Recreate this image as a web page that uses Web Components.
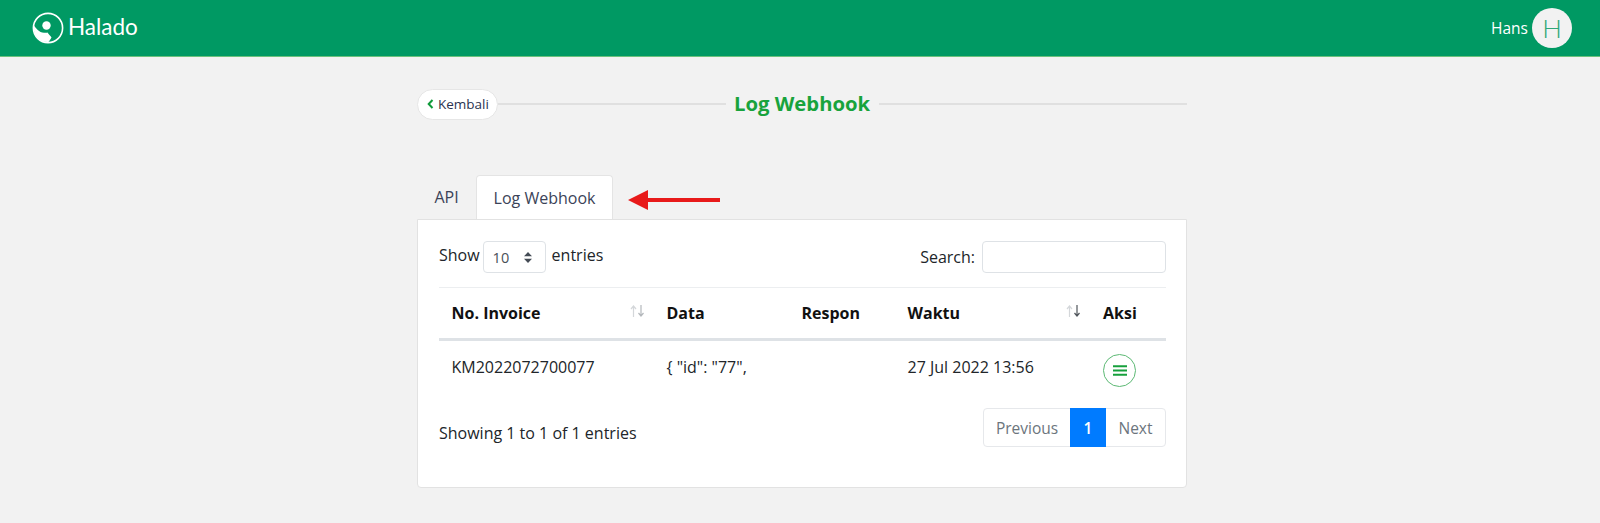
<!DOCTYPE html>
<html lang="id">
<head>
<meta charset="utf-8">
<title>Log Webhook</title>
<style>
  html, body { margin: 0; height: 100%; }
  body { background: #f2f2f2; color: #212529; font-family: "Open Sans", "Noto Sans", sans-serif; font-size: 16px; overflow: hidden; }
</style>
</head>
<body>
<app-header user="Hans"></app-header>
<main-page>
  <page-title back="Kembali">Log Webhook</page-title>
  <tab-bar></tab-bar>
  <log-card></log-card>
</main-page>

<script>
class AppHeader extends HTMLElement {
  connectedCallback() {
    const user = this.getAttribute("user");
    this.attachShadow({ mode: "open" });
    this.shadowRoot.innerHTML = `
      <style>
        :host { display: flex; align-items: center; justify-content: space-between; box-sizing: border-box; height: 57px; padding: 0 28px 1px 32px; background: #009963; border-bottom: 1px solid #6cc27c; color: #fff; }
        .brand { display: flex; align-items: center; gap: 4px; }
        .brand span { font-family: Lato, sans-serif; font-weight: 400; font-size: 22.500px; line-height: 1; }
        .user { display: flex; align-items: center; gap: 4px; font-size: 15.500px; }
        .avatar { width: 40px; height: 40px; border-radius: 50%; background: #f2f2f2; color: #2fa878; display: flex; align-items: center; justify-content: center; font-size: 26px; font-weight: 300; font-family: Lato, sans-serif; }
      </style>
      <div class="brand">
        <svg width="32" height="32" viewBox="0 0 32 32">
          <circle cx="16" cy="16" r="14.600" fill="none" stroke="#fff" stroke-width="1.600"/>
          <path d="M1.500 13C4 16 7 20.500 12 20.800c1.500 0 2.500 0 3.500-.3 1.500 2 3 3.500 4 5-1 1.800-2 3.300-3 4.500C7 30.500 1 23 1.500 13Z" fill="#fff"/>
          <circle cx="14.500" cy="13.500" r="4.200" fill="#fff"/>
        </svg>
        <span>Halado</span>
      </div>
      <div class="user">${user}<div class="avatar">H</div></div>`;
  }
}

class MainPage extends HTMLElement {
  constructor() {
    super();
    this.attachShadow({ mode: "open" });
    this.shadowRoot.innerHTML = `
      <style>
        :host { display: block; box-sizing: border-box; width: 770px; margin: 0 0 0 417px; padding-top: 31px; position: relative; }
      </style>
      <slot></slot>`;
  }
}

class PageTitle extends HTMLElement {
  connectedCallback() {
    const back = this.getAttribute("back");
    this.attachShadow({ mode: "open" });
    this.shadowRoot.innerHTML = `
      <style>
        :host { display: flex; align-items: center; height: 31px; }
        .back { display: flex; align-items: center; gap: 4px; box-sizing: border-box; width: 81px; height: 31px; margin-top: 1px; padding-left: 9px; border: 1px solid #e6e6e6; border-radius: 16px; background: #fff; font-size: 13.500px; color: #2b3350; }
        .line { flex: 1; height: 2px; background: #e0e0e0; }
        .line.left { flex: none; width: 228px; }
        h1 { margin: 0 9px 0 8px; font-size: 20.300px; font-weight: 700; color: #18a33c; line-height: 31px; }
      </style>
      <div class="back">
        <svg width="7" height="10" viewBox="0 0 7 10"><path d="M5.500 1 1.700 5l3.800 4" fill="none" stroke="#109a3a" stroke-width="2"/></svg>
        ${back}
      </div>
      <div class="line left"></div>
      <h1><slot></slot></h1>
      <div class="line"></div>`;
  }
}

class TabBar extends HTMLElement {
  constructor() {
    super();
    this.attachShadow({ mode: "open" });
    this.shadowRoot.innerHTML = `
      <style>
        :host { display: flex; align-items: stretch; height: 44px; margin-top: 56px; position: relative; color: #3b4358; font-size: 16px; }
        .tab { display: flex; align-items: center; justify-content: center; box-sizing: border-box; }
        .plain { width: 59px; }
        .active { width: 137px; background: #fff; border: 1px solid #e4e4e4; border-bottom: 0; border-radius: 4px 4px 0 0; }
        svg { position: absolute; left: 211px; top: 15px; }
      </style>
      <div class="tab plain">API</div>
      <div class="tab active">Log Webhook</div>
      <svg width="92" height="20" viewBox="0 0 92 20"><path d="M0 10 20 0v8h72v4H20v8Z" fill="#e81a1a"/></svg>`;
  }
}

class LogCard extends HTMLElement {
  constructor() {
    super();
    this.attachShadow({ mode: "open" });
    const sort = (left, right) => `<svg class="sort" width="15" height="12" viewBox="0 0 15 12">
      <path d="M3.500 12V1.500M1 4l2.500-3L6 4" fill="none" stroke="${left}" stroke-width="1.200"/>
      <path d="M11 0v10.500M8.500 8l2.500 3 2.500-3" fill="none" stroke="${right}" stroke-width="1.200"/></svg>`;
    this.shadowRoot.innerHTML = `
      <style>
        :host { display: block; box-sizing: border-box; height: 269px; padding: 21px 20px 0 21px; background: #fff; border: 1px solid #e2e2e2; border-radius: 0 0 4px 4px; color: #212529; }
        .toolbar { display: flex; justify-content: space-between; height: 46px; }
        .length { display: flex; align-items: flex-start; line-height: 28px; gap: 5px; }
        .search { display: flex; gap: 7px; line-height: 32px; }
        .picker { position: relative; margin: 0 1px 0 -2px; }
        select { appearance: none; box-sizing: border-box; display: block; width: 63px; height: 32px; padding: 0 0 0 9px; border: 1px solid #dee2e6; border-radius: 4px; background: #fff; font: 14.500px "Open Sans", sans-serif; color: #495057; }
        .picker svg { position: absolute; right: 13px; top: 11px; }
        input { box-sizing: border-box; width: 184px; height: 32px; border: 1px solid #dee2e6; border-radius: 4px; background: #fff; }
        table { width: 727px; border-collapse: collapse; table-layout: fixed; border-top: 1px solid #eceef0; }
        th { height: 52px; padding: 0 13px 0 12.500px; text-align: left; font-weight: 700; color: #111; border-bottom: 3px solid #dee2e6; box-sizing: border-box; }
        td { height: 52px; padding: 0 13px 0 12.500px; }
        th:last-child, td:last-child { padding-left: 13px; }
        .th-in { display: flex; justify-content: space-between; align-items: center; }
        .sort { margin: -4px -4px 0 0; flex: none; }
        .action { display: flex; align-items: center; justify-content: center; width: 33px; height: 33px; box-sizing: border-box; border: 1px solid #5cb974; border-radius: 50%; background: #fff; margin-top: 6px; }
        .footer { display: flex; justify-content: space-between; align-items: center; margin-top: 15px; }
        .info { padding-top: 11px; }
        .pager { display: flex; height: 39px; box-sizing: border-box; border: 1px solid #e6e8eb; border-radius: 4px; color: #6c757d; font-size: 15.500px; }
        .pager div { display: flex; align-items: center; justify-content: center; }
        .prev { width: 86px; }
        .current { width: 36px; background: #007bff; color: #fff; margin: -1px 0; font-weight: 600; }
        .next { width: 59px; }
      </style>
      <div class="toolbar">
        <div class="length">Show
          <div class="picker">
            <select><option>10</option></select>
            <svg width="10" height="11" viewBox="0 0 10 11"><path d="M5 0 9 4.300H1ZM5 11 1 6.700h8Z" fill="#444b55"/></svg>
          </div>
          entries
        </div>
        <div class="search">Search: <input type="search"></div>
      </div>
      <table>
        <colgroup><col style="width:215px"><col style="width:135px"><col style="width:106px"><col style="width:195px"><col style="width:76px"></colgroup>
        <thead>
          <tr>
            <th><div class="th-in">No. Invoice ${sort("#d4d7da", "#b4b8bc")}</div></th>
            <th>Data</th>
            <th>Respon</th>
            <th><div class="th-in">Waktu ${sort("#d4d7da", "#50565c")}</div></th>
            <th>Aksi</th>
          </tr>
        </thead>
        <tbody>
          <tr>
            <td>KM2022072700077</td>
            <td>{ "id": "77",</td>
            <td></td>
            <td>27 Jul 2022 13:56</td>
            <td><div class="action"><svg width="14" height="11" viewBox="0 0 14 11"><path d="M0 1.200h14M0 5.500h14M0 9.800h14" stroke="#17a03c" stroke-width="2"/></svg></div></td>
          </tr>
        </tbody>
      </table>
      <div class="footer">
        <div class="info">Showing 1 to 1 of 1 entries</div>
        <div class="pager"><div class="prev">Previous</div><div class="current">1</div><div class="next">Next</div></div>
      </div>`;
  }
}

customElements.define("app-header", AppHeader);
customElements.define("main-page", MainPage);
customElements.define("page-title", PageTitle);
customElements.define("tab-bar", TabBar);
customElements.define("log-card", LogCard);
</script>
</body>
</html>
